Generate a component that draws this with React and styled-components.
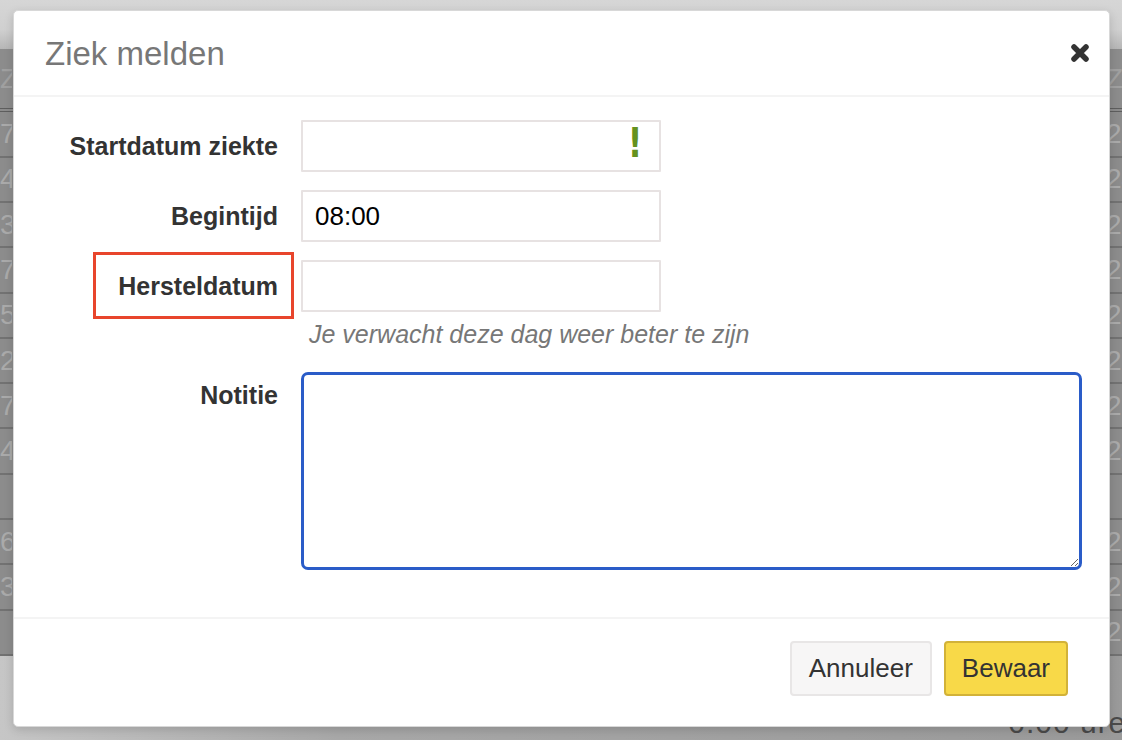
import React from "react";
import styled, { createGlobalStyle } from "styled-components";

const GlobalStyle = createGlobalStyle`
  html, body {
    margin: 0;
    padding: 0;
    background: #8c8c8c;
    font-family: "Liberation Sans", Arial, Helvetica, sans-serif;
  }
  * {
    box-sizing: border-box;
  }
`;

// page behind the modal (already dimmed by the backdrop)
const Page = styled.div`
  position: relative;
  width: 1122px;
  height: 740px;
  overflow: hidden;
  display: flex;
  flex-direction: column;
`;

const TopBar = styled.div`
  height: 50px;
  background: linear-gradient(to bottom, #d6d6d6 0%, #d0d0d0 60%, #b6b6b6 100%);
`;

const TableHead = styled.div`
  height: 64px;
  background: #8c8c8c;
  border-bottom: 4px double #5e5e5e;
  display: flex;
  justify-content: space-between;
  align-items: center;
  color: #a0a0a0;
  font-size: 28px;
`;

const Row = styled.div`
  height: 46px;
  background: #8c8c8c;
  border-bottom: 2px solid #727272;
  display: flex;
  justify-content: space-between;
  align-items: center;
  color: #aaaaaa;
  font-size: 28px;
`;

const Cell = styled.span`
  width: ${(p) => p.w || 16}px;
  overflow: hidden;
  white-space: nowrap;
`;

const PageFoot = styled.div`
  flex: 1;
  background: linear-gradient(to right, #c6c6c6 0%, #a8a8a8 30%, #9a9a9a 100%);
  display: flex;
  justify-content: flex-end;
  padding: 50px 0 0 0;
  color: #4a4a4a;
  font-size: 30px;
  letter-spacing: 1px;
  white-space: nowrap;
`;

const FootText = styled.span`
  margin-right: -22px;
`;

// modal
const Modal = styled.div`
  position: absolute;
  left: 13px;
  top: 10px;
  width: 1097px;
  height: 717px;
  background: #fff;
  border: 1px solid #d8d8d8;
  border-radius: 5px;
  box-shadow: 0 3px 10px rgba(0, 0, 0, 0.15);
  display: flex;
  flex-direction: column;
`;

const Header = styled.div`
  height: 86px;
  padding: 0 20px 0 31px;
  border-bottom: 2px solid #f4f4f4;
  display: flex;
  align-items: center;
  justify-content: space-between;
`;

const Title = styled.h3`
  margin: 0;
  font-size: 33px;
  font-weight: 400;
  color: #777;
  padding-top: 2px;
`;

const Close = styled.button`
  border: none;
  background: none;
  padding: 0;
  width: 18px;
  height: 18px;
  cursor: pointer;
  display: flex;
  svg {
    display: block;
  }
`;

const Body = styled.div`
  flex: 1;
  padding: 23px 27px 0 0;
  display: flex;
  flex-direction: column;
  gap: 18px;
`;

const Field = styled.div`
  display: grid;
  grid-template-columns: 264px 1fr;
  column-gap: 23px;
  align-items: ${(p) => (p.top ? "start" : "center")};
`;

const Label = styled.label`
  justify-self: end;
  font-size: 25px;
  font-weight: 700;
  color: #333;
  position: relative;
  line-height: 28px;
  padding-top: ${(p) => (p.top ? "9px" : "0")};

  ${(p) =>
    p.marked &&
    `
    &::before {
      content: "";
      position: absolute;
      left: -25px;
      right: -16px;
      top: -20px;
      bottom: -19px;
      border: 3px solid #e8452c;
    }
  `}
`;

const Control = styled.div`
  display: flex;
  flex-direction: column;
  align-items: flex-start;
`;

const InputWrap = styled.div`
  position: relative;
  width: 360px;
`;

const Input = styled.input`
  width: 360px;
  height: 52px;
  border: 2px solid #e7e2e2;
  border-radius: 1px;
  padding: 0 12px;
  font-family: inherit;
  font-size: 26px;
  color: #000;
  background: #fff;
  outline: none;
`;

const Bang = styled.span`
  position: absolute;
  right: 17px;
  top: 0;
  font-family: "DejaVu Sans", sans-serif;
  font-size: 40px;
  font-weight: 700;
  color: #64921f;
  line-height: 46px;
  transform: scaleX(0.8);
  pointer-events: none;
`;

const Help = styled.p`
  margin: 9px 0 6px 8px;
  font-size: 25px;
  font-style: italic;
  color: #777;
  line-height: 27px;
`;

const TextArea = styled.textarea`
  width: 100%;
  height: 198px;
  border: 3px solid #2a5cc8;
  border-radius: 7px;
  font-family: inherit;
  font-size: 24px;
  padding: 8px 12px;
  outline: none;
  resize: vertical;
`;

const Footer = styled.div`
  height: 109px;
  border-top: 2px solid #f4f4f4;
  padding: 22px 41px 0 0;
  display: flex;
  justify-content: flex-end;
  align-items: flex-start;
  gap: 12px;
`;

const Button = styled.button`
  height: 55px;
  padding: 0 ${(p) => (p.primary ? 16 : 17)}px;
  font-family: inherit;
  font-size: 26px;
  color: #333;
  border-radius: 4px;
  border: 2px solid ${(p) => (p.primary ? "#d2b238" : "#e8e6e6")};
  background: ${(p) => (p.primary ? "#f8d948" : "#f7f6f6")};
  cursor: pointer;
`;

const left = ["7", "4", "3", "7", "5", "2", "7", "4", "", "6", "3", ""];
const right = ["27", "24", "23", "27", "25", "22", "27", "24", "", "26", "23", "2"];

export default function App() {
  return (
    <>
      <GlobalStyle />
      <Page>
        <TopBar />
        <TableHead>
          <Cell w={12}>Z</Cell>
          <Cell w={16}>Z</Cell>
        </TableHead>
        {right.map((n, i) => (
          <Row key={i}>
            <Cell w={12}>{left[i]}</Cell>
            <Cell w={16}>{n}</Cell>
          </Row>
        ))}
        <PageFoot>
          <FootText>0.00 uren</FootText>
        </PageFoot>

        <Modal>
          <Header>
            <Title>Ziek melden</Title>
            <Close aria-label="Sluiten">
              <svg width="18" height="18" viewBox="0 0 18 18">
                <path
                  d="M3 3 L15 15 M15 3 L3 15"
                  stroke="#333"
                  strokeWidth="5.5"
                  strokeLinecap="round"
                />
              </svg>
            </Close>
          </Header>

          <Body>
            <Field>
              <Label>Startdatum ziekte</Label>
              <Control>
                <InputWrap>
                  <Input type="text" />
                  <Bang>!</Bang>
                </InputWrap>
              </Control>
            </Field>

            <Field>
              <Label>Begintijd</Label>
              <Control>
                <Input type="text" defaultValue="08:00" />
              </Control>
            </Field>

            <Field top>
              <Label marked style={{ marginTop: 12 }}>Hersteldatum</Label>
              <Control>
                <Input type="text" />
                <Help>Je verwacht deze dag weer beter te zijn</Help>
              </Control>
            </Field>

            <Field top>
              <Label top>Notitie</Label>
              <TextArea />
            </Field>
          </Body>

          <Footer>
            <Button>Annuleer</Button>
            <Button primary>Bewaar</Button>
          </Footer>
        </Modal>
      </Page>
    </>
  );
}
